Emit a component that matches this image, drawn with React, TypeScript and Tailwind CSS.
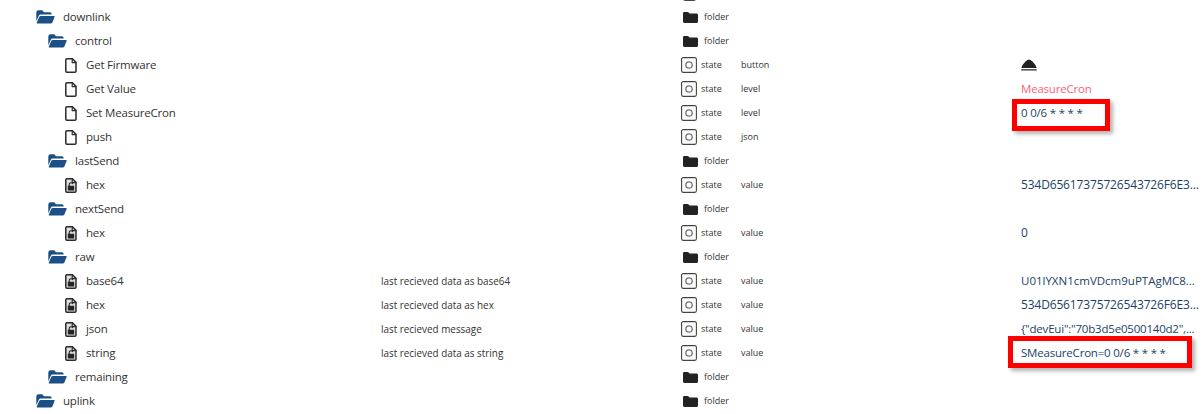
const FolderOpen = () => (
  <svg width="19" height="14" viewBox="0 0 19 14" className="shrink-0">
    <path d="M0.3 2.6 Q0.3 0.3 2.6 0.3 L6.2 0.3 L8 2.2 L14 2.2 Q15.6 2.2 15.6 3.8 L15.6 4.6 L4.8 4.6 Q3.3 4.6 2.7 6 L0.6 10.8 L0.3 10.8 Z" fill="#1b4f85" />
    <path d="M4.8 6 L18 6 Q19 6 18.6 7 L16.4 12.5 Q15.9 13.6 14.6 13.6 L1.3 13.6 Q0.4 13.6 0.8 12.6 L3.2 7 Q3.7 6 4.8 6 Z" fill="#1b4f85" />
  </svg>
);

const FileIcon = () => (
  <svg width="12" height="15" viewBox="0 0 12 15" className="shrink-0" fill="none" stroke="#2a2a2a" strokeWidth="1.5">
    <path d="M1.9 0.8 L7.4 0.8 L11 4.4 L11 13.1 Q11 14.2 9.9 14.2 L1.9 14.2 Q0.8 14.2 0.8 13.1 L0.8 1.9 Q0.8 0.8 1.9 0.8 Z" />
    <path d="M7.2 0.8 L7.2 4.6 L11 4.6" strokeWidth="1.2" />
  </svg>
);

const LockedFile = () => (
  <svg width="12" height="15" viewBox="0 0 12 15" className="shrink-0" fill="none">
    <path d="M1.9 0.8 L7.4 0.8 L11 4.4 L11 13.1 Q11 14.2 9.9 14.2 L1.9 14.2 Q0.8 14.2 0.8 13.1 L0.8 1.9 Q0.8 0.8 1.9 0.8 Z" stroke="#2a2a2a" strokeWidth="1.5" fill="#dedede" />
    <path d="M7.2 0.8 L7.2 4.6 L11 4.6" stroke="#2a2a2a" strokeWidth="1.2" />
    <path d="M4.2 8 L4.2 6.4 Q4.2 4.8 6 4.8 Q7.5 4.8 7.8 6.1" stroke="#222" strokeWidth="1.1" />
    <rect x="2.8" y="7.8" width="6.4" height="4.8" rx="0.6" fill="#222" />
  </svg>
);

const FolderSolid = () => (
  <svg width="15" height="11" viewBox="0 0 15 11" className="shrink-0">
    <path d="M0 1.2 Q0 0 1.2 0 L5 0 L6.6 1.6 L13.6 1.6 Q15 1.6 15 3 L15 9.6 Q15 11 13.6 11 L1.4 11 Q0 11 0 9.6 Z" fill="#222" />
  </svg>
);

const StateIcon = () => (
  <svg width="16" height="16" viewBox="0 0 16 16" className="shrink-0" fill="none">
    <rect x="0.6" y="0.6" width="14.8" height="14.8" rx="1.6" stroke="#444" strokeWidth="1.1" />
    <circle cx="8" cy="8" r="3.2" stroke="#777" strokeWidth="1.3" />
  </svg>
);

const Eject = () => (
  <svg width="16" height="12" viewBox="0 0 16 12" className="-mt-px" fill="none">
    <path d="M0.3 9 Q1.5 5.5 4.5 2.6 L6.5 1 Q8 -0.1 9.5 1 L11.5 2.6 Q14.5 5.5 15.7 9 Z" fill="#222" />
    <rect x="0.3" y="10" width="15.4" height="1.6" fill="#555" />
  </svg>
);

type Row = {
  name: string;
  depth: 0 | 1 | 2;
  kind: "open" | "file" | "lock";
  desc?: string;
  role?: string;
  value?: string;
  valueClass?: string;
  eject?: boolean;
};

const text = "text-[11.5px] tracking-[-0.2px] text-[#1c3f66]";
const hex = "text-[12px] tracking-[-0.15px] text-[#1c3f66]";

const rows: Row[] = [
  { name: "downlink", depth: 0, kind: "open" },
  { name: "control", depth: 1, kind: "open" },
  { name: "Get Firmware", depth: 2, kind: "file", role: "button", eject: true },
  { name: "Get Value", depth: 2, kind: "file", role: "level", value: "MeasureCron", valueClass: "text-[11.5px] tracking-[-0.2px] text-[#fb5f7c]" },
  { name: "Set MeasureCron", depth: 2, kind: "file", role: "level", value: "0 0/6 * * * *", valueClass: text },
  { name: "push", depth: 2, kind: "file", role: "json" },
  { name: "lastSend", depth: 1, kind: "open" },
  { name: "hex", depth: 2, kind: "lock", role: "value", value: "534D65617375726543726F6E3...", valueClass: hex },
  { name: "nextSend", depth: 1, kind: "open" },
  { name: "hex", depth: 2, kind: "lock", role: "value", value: "0", valueClass: hex },
  { name: "raw", depth: 1, kind: "open" },
  { name: "base64", depth: 2, kind: "lock", desc: "last recieved data as base64", role: "value", value: "U01lYXN1cmVDcm9uPTAgMC8...", valueClass: "text-[11.5px] text-[#1c3f66]" },
  { name: "hex", depth: 2, kind: "lock", desc: "last recieved data as hex", role: "value", value: "534D65617375726543726F6E3...", valueClass: hex },
  { name: "json", depth: 2, kind: "lock", desc: "last recieved message", role: "value", value: '{"devEui":"70b3d5e0500140d2",...', valueClass: text },
  { name: "string", depth: 2, kind: "lock", desc: "last recieved data as string", role: "value", value: "SMeasureCron=0 0/6 * * * *", valueClass: text },
  { name: "remaining", depth: 1, kind: "open" },
  { name: "uplink", depth: 0, kind: "open" },
];

const indent = { 0: "pl-[36px]", 1: "pl-[48px]", 2: "pl-[65px]" };
const nameGap = { open: "gap-[8px]", file: "gap-[9px]", lock: "gap-[9px]" };

function TreeRow({ row }: { row: Row }) {
  const isFolder = row.kind === "open";
  return (
    <div className="flex h-6 items-center text-[#333]">
      <div className={`flex w-[381px] shrink-0 items-center ${indent[row.depth]} ${nameGap[row.kind]}`}>
        {row.kind === "open" && <FolderOpen />}
        {row.kind === "file" && <FileIcon />}
        {row.kind === "lock" && <LockedFile />}
        <span className="text-[11.5px] tracking-[-0.2px]">{row.name}</span>
      </div>
      <div className="w-[300px] shrink-0 text-[9.9px]">{row.desc}</div>
      {isFolder ? (
        <div className="flex w-[340px] shrink-0 items-center gap-[6px] pl-[2px] text-[9px]">
          <FolderSolid />
          <span>folder</span>
        </div>
      ) : (
        <div className="flex w-[340px] shrink-0 items-center text-[9px]">
          <StateIcon />
          <span className="ml-[4px] w-[40px]">state</span>
          <span>{row.role}</span>
        </div>
      )}
      <div className={`whitespace-nowrap ${row.valueClass ?? ""}`}>
        {row.eject ? <Eject /> : row.value}
      </div>
    </div>
  );
}

export default function App() {
  return (
    <div
      className="relative h-[414px] w-[1202px] overflow-hidden bg-white pt-[5px]"
      style={{ fontFamily: '"Open Sans", "Noto Sans", sans-serif' }}
    >
      <div className="absolute left-[682px] top-[-11px] h-3 w-[15px] rounded-sm bg-[#444]" />
      {rows.map((row, i) => (
        <TreeRow key={i} row={row} />
      ))}
      <div className="absolute left-[1012px] top-[99px] h-[32px] w-[98px] border-[5px] border-[#ff0000] shadow-[3px_3px_4px_rgba(0,0,0,0.3)]" />
      <div className="absolute left-[1008px] top-[336px] h-[32px] w-[184px] border-[5px] border-[#ff0000] shadow-[3px_3px_4px_rgba(0,0,0,0.3)]" />
    </div>
  );
}
